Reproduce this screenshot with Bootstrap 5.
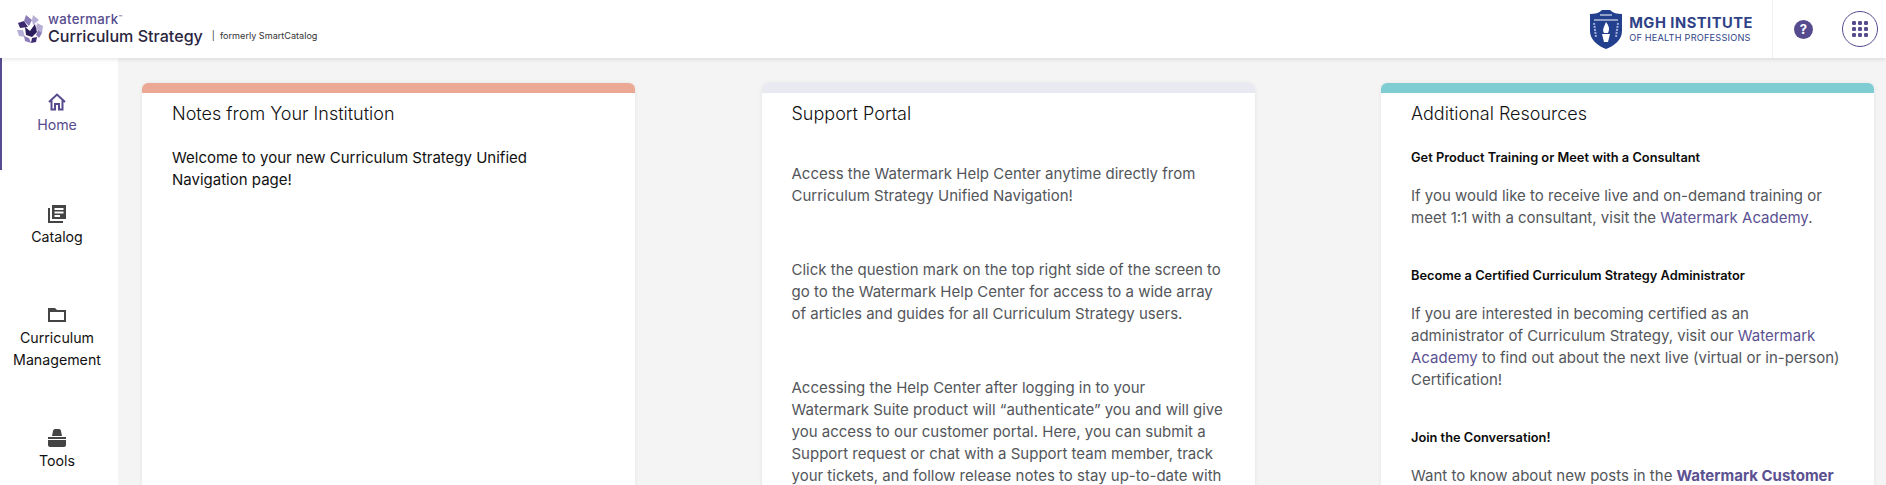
<!DOCTYPE html>
<html lang="en">
<head>
    <meta charset="UTF-8">
    <meta name="viewport" content="width=device-width, initial-scale=1.0">
    <link href="https://cdn.jsdelivr.net/npm/bootstrap@5.3.0/dist/css/bootstrap.min.css" rel="stylesheet">
    <script src="https://cdn.jsdelivr.net/npm/bootstrap@5.3.0/dist/js/bootstrap.bundle.min.js"></script>
    <title>Curriculum Strategy</title>
    <style>
        html, body { height: 100%; }
        body { font-family: Inter, "Liberation Sans", sans-serif; background: #f4f4f4; overflow: hidden; font-size: 15px; line-height: 22px; color: #53565a; }
        .top-bar { height: 58px; padding: 0; background: #fff; box-shadow: 0 1px 5px rgba(0,0,0,.12); position: relative; z-index: 2; flex-wrap: nowrap; }
        .wm-mark { width: 26px; height: 30px; margin-left: 17px; margin-right: 5px; }
        .wm-word { font-size: 13.2px; line-height: 13px; color: #564b8e; font-weight: 500; letter-spacing: .3px; }
        .wm-word sup { font-size: 6px; top: -.6em; }
        .wm-product { font-size: 16.1px; line-height: 20px; color: #2a2540; font-weight: 500; }
        .wm-former { font-size: 9.1px; color: #333; margin-left: 9px; margin-top: 13px; }
        .mgh-shield { width: 34px; height: 41px; margin-right: 6px; }
        .mgh-name { font-size: 14.7px; line-height: 17px; font-weight: 700; color: #2f4288; letter-spacing: .5px; }
        .mgh-sub { font-size: 9.2px; line-height: 11px; color: #2f4288; letter-spacing: .2px; }
        .top-sep { width: 1px; height: 58px; background: #efefef; margin-left: 19px; }
        .help-dot { width: 19px; height: 19px; border-radius: 50%; background: #564b8e; color: #fff; font-size: 13px; font-weight: 700; line-height: 19px; text-align: center; margin-left: 21px; }
        .apps-btn { width: 36px; height: 36px; border: 1px solid #564b8e; border-radius: 50%; margin-left: 29px; margin-right: 8px; }
        .side-nav { width: 118px; flex: none; background: #fff; }
        .side-link { padding: 34px 8px 22px 4px; color: #111; font-size: 14.2px; line-height: 22px; text-align: center; text-decoration: none; display: block; }
        .side-link svg { display: block; width: 20px; height: 20px; margin: 0 auto 2px; fill: #444; }
        .side-link.is-active { padding-bottom: 34px; color: #564b8e; border-left: 2px solid #564b8e; padding-left: 2px; }
        .side-link.is-active svg { fill: none; stroke: #564b8e; stroke-width: 2; }
        .side-link.is-curric { padding-top: 35px; }
        .side-link.is-tools { padding-top: 35px; }
        .board { padding: 25px 11px 0 24px; gap: 126.5px; }
        .info-card { width: 493px; min-height: 600px; border: 0; border-radius: 6px; box-shadow: 0 0 4px rgba(0,0,0,.07); overflow: hidden; }
        .info-strip { height: 10px; }
        .strip-coral { background: #eba995; }
        .strip-lilac { background: #e9e9f2; }
        .strip-teal { background: #7fccd3; }
        .info-body { padding: 0 30px; }
        .info-title { font-size: 18px; line-height: 22px; font-weight: 300; color: #111; margin: 10px 0 22px; }
        .info-dark { color: #111; }
        .info-body p { margin-bottom: 52px; }
        .info-head { font-size: 12.8px; font-weight: 600; color: #0b0b0b; margin-bottom: 16px !important; }
        .info-body p.info-tight { margin-bottom: 36px; }
        .info-body a { color: #5b5191; text-decoration: none; }
        .gap-top { margin-top: 38px; }
    </style>
</head>
<body class="d-flex flex-column">
    <nav class="navbar top-bar">
        <div class="d-flex align-items-center">
            <svg class="wm-mark" viewBox="0 0 26 30">
                <polygon points="9,1 15,6 12,12 7,7" fill="#8a7cb8"/>
                <polygon points="16,1 22,6 16,11 15,6" fill="#b7aed6"/>
                <polygon points="1,9 7,7 11,13 3,14" fill="#3b2a6e"/>
                <polygon points="20,9 26,12 25,19 19,15" fill="#b7aed6"/>
                <polygon points="0,16 6,16 8,23 2,22" fill="#b7aed6"/>
                <polygon points="7,22 12,24 14,29 8,27" fill="#8a7cb8"/>
                <polygon points="14,29 15,24 20,23 19,28" fill="#3b2a6e"/>
                <polygon points="21,16 25,19 22,24 19,21" fill="#8a7cb8"/>
                <polygon points="8,13 13,17 18,10 20,18 15,23 9,21" fill="#2c1d5c"/>
            </svg>
            <div>
                <div class="wm-word">watermark<sup>™</sup></div>
                <div class="wm-product">Curriculum Strategy</div>
            </div>
            <div class="wm-former">|&nbsp;&nbsp;formerly SmartCatalog</div>
        </div>
        <div class="d-flex align-items-center">
            <svg class="mgh-shield" viewBox="0 0 34 41">
                <path d="M1 5 C6 5 10 4 13 1 L21 1 C24 4 28 5 33 5 L33 22 C33 31 25 37 17 40 C9 37 1 31 1 22 Z" fill="#23408f"/>
                <path d="M5 11 H29 M11 6 H23" stroke="#fff" stroke-width="1" fill="none"/>
                <path d="M17 13 C20 17 21 20 19 24 H15 C13 21 15 18 17 13 Z" fill="#fff"/>
                <path d="M13 25 H21 L19 33 H15 Z" fill="#fff"/>
                <path d="M5 14 L7 28 M29 14 L27 28" stroke="#9fb0dc" stroke-width="2" stroke-dasharray="2 1" fill="none"/>
            </svg>
            <div>
                <div class="mgh-name">MGH INSTITUTE</div>
                <div class="mgh-sub">OF HEALTH PROFESSIONS</div>
            </div>
            <div class="top-sep"></div>
            <div class="help-dot">?</div>
            <div class="apps-btn d-flex align-items-center justify-content-center">
                <svg width="16" height="16" viewBox="0 0 16 16" fill="#564b8e">
                    <rect x="0" y="0" width="4" height="4" rx="1.3"/><rect x="6" y="0" width="4" height="4" rx="1.3"/><rect x="12" y="0" width="4" height="4" rx="1.3"/>
                    <rect x="0" y="6" width="4" height="4" rx="1.3"/><rect x="6" y="6" width="4" height="4" rx="1.3"/><rect x="12" y="6" width="4" height="4" rx="1.3"/>
                    <rect x="0" y="12" width="4" height="4" rx="1.3"/><rect x="6" y="12" width="4" height="4" rx="1.3"/><rect x="12" y="12" width="4" height="4" rx="1.3"/>
                </svg>
            </div>
        </div>
    </nav>
    <div class="d-flex flex-grow-1">
        <div class="side-nav">
            <a href="#" class="side-link is-active">
                <svg viewBox="0 0 20 20"><path d="M2 10 L10 2.5 L18 10 M4.5 8.5 V17.5 H8 V12 H12 V17.5 H15.5 V8.5"/></svg>
                Home
            </a>
            <a href="#" class="side-link">
                <svg viewBox="0 0 20 20"><path d="M5 1 H19 V15 H5 Z M7.5 4 V6 H16.5 V4 Z M7.5 7.5 V9.5 H16.5 V7.5 Z M7.5 11 V13 H13 V11 Z" fill-rule="evenodd"/><path d="M1 4 H3 V17 H16 V19 H1 Z"/></svg>
                Catalog
            </a>
            <a href="#" class="side-link is-curric">
                <svg viewBox="0 0 20 20"><path d="M1 3 H8 L10 5 H19 V17 H1 Z M3 7 V15 H17 V7 Z" fill-rule="evenodd"/></svg>
                Curriculum Management
            </a>
            <a href="#" class="side-link is-tools">
                <svg viewBox="0 0 20 20"><path d="M5 8 L6 3 C6 2 7 1 8 1 H12 C13 1 14 2 14 3 L15 8 Z M1 9 H19 V11 H1 Z M1 12 H19 V17 C19 18 18 19 17 19 H3 C2 19 1 18 1 17 Z"/></svg>
                Tools
            </a>
        </div>
        <main class="board d-flex align-items-start">
            <section class="card info-card">
                <div class="info-strip strip-coral"></div>
                <div class="info-body">
                    <h2 class="info-title">Notes from Your Institution</h2>
                    <p class="info-dark">Welcome to your new Curriculum Strategy Unified Navigation page!</p>
                </div>
            </section>
            <section class="card info-card">
                <div class="info-strip strip-lilac"></div>
                <div class="info-body">
                    <h2 class="info-title">Support Portal</h2>
                    <p class="gap-top">Access the Watermark Help Center anytime directly from Curriculum Strategy Unified Navigation!</p>
                    <p>Click the question mark on the top right side of the screen to go to the Watermark Help Center for access to a wide array of articles and guides for all Curriculum Strategy users.</p>
                    <p>Accessing the Help Center after logging in to your Watermark Suite product will “authenticate” you and will give you access to our customer portal. Here, you can submit a Support request or chat with a Support team member, track your tickets, and follow release notes to stay up-to-date with</p>
                </div>
            </section>
            <section class="card info-card">
                <div class="info-strip strip-teal"></div>
                <div class="info-body">
                    <h2 class="info-title">Additional Resources</h2>
                    <p class="info-head">Get Product Training or Meet with a Consultant</p>
                    <p class="info-tight">If you would like to receive live and on-demand training or meet 1:1 with a consultant, visit the <a href="#">Watermark Academy</a>.</p>
                    <p class="info-head">Become a Certified Curriculum Strategy Administrator</p>
                    <p class="info-tight">If you are interested in becoming certified as an administrator of Curriculum Strategy, visit our <a href="#">Watermark Academy</a> to find out about the next live (virtual or in-person) Certification!</p>
                    <p class="info-head">Join the Conversation!</p>
                    <p>Want to know about new posts in the <a href="#" class="fw-bold">Watermark Customer</a></p>
                </div>
            </section>
        </main>
    </div>
</body>
</html>
